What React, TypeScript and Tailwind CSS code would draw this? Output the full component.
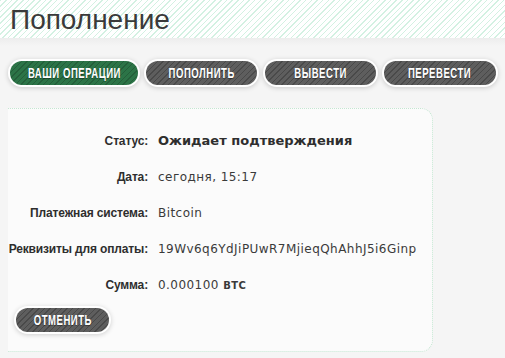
import { FC } from "react";

type PillProps = {
  label: string;
  active?: boolean;
  className?: string;
};

const Pill: FC<PillProps> = ({ label, active, className }) => (
  <button
    className={
      "h-[24px] rounded-full text-white shadow-[0_0_0_2px_#ffffff,0_1px_5px_2px_rgba(0,0,0,0.18)] flex items-center justify-center " +
      (active
        ? "bg-[#2c7447] bg-[repeating-linear-gradient(135deg,rgba(0,0,0,0.18)_0_1px,transparent_1px_4px)] "
        : "bg-[#5e5e5e] bg-[repeating-linear-gradient(135deg,rgba(0,0,0,0.22)_0_1px,transparent_1px_4px)] ") +
      (className ?? "")
    }
  >
    <span className="inline-block scale-x-[0.68] whitespace-nowrap font-bold uppercase text-[14px] tracking-[0.8px] [font-family:'Liberation_Sans',sans-serif] [text-shadow:0_1px_1px_rgba(0,0,0,0.4)]">
      {label}
    </span>
  </button>
);

const rows: { label: string; value: React.ReactNode }[] = [
  {
    label: "Статус:",
    value: <span className="font-bold text-[13px] text-[#2e2e2e] tracking-[0px]">Ожидает подтверждения</span>,
  },
  { label: "Дата:", value: "сегодня, 15:17" },
  { label: "Платежная система:", value: "Bitcoin" },
  { label: "Реквизиты для оплаты:", value: "19Wv6q6YdJiPUwR7MjieqQhAhhJ5i6Ginp" },
  {
    label: "Сумма:",
    value: (
      <span>
        0.000100 <span className="font-bold text-[10px]">BTC</span>
      </span>
    ),
  },
];

export default function App() {
  return (
    <div className="w-[505px] h-[358px] overflow-hidden bg-[#f5f5f5] [font-family:'Liberation_Sans',sans-serif]">
      <div className="h-[38px] bg-white bg-[repeating-linear-gradient(135deg,#d3f1e2_0_1px,transparent_1px_4px)] pl-[10px] flex items-center">
        <h1 className="text-[28px] leading-none text-[#3a3a3a] pt-[2px] [font-family:'Liberation_Sans',sans-serif]">
          Пополнение
        </h1>
      </div>
      <div className="h-[8px] bg-gradient-to-b from-[#ededed] to-transparent" />

      <div className="flex gap-[8px] pl-[10px] mt-[15px]">
        <Pill label="Ваши операции" active className="w-[128px]" />
        <Pill label="Пополнить" className="w-[111px]" />
        <Pill label="Вывести" className="w-[111px]" />
        <Pill label="Перевести" className="w-[112px]" />
      </div>

      <div className="ml-[8px] mt-[23px] w-[425px] h-[244px] bg-[#fbfbfb] rounded-r-[12px] border-t border-r border-b border-dotted border-[#c4e6d1] pt-[14px]">
        <div className="grid grid-cols-[140px_1fr] gap-x-[10px]">
          {rows.map((r) => (
            <div key={r.label} className="contents">
              <div className="h-[36px] flex items-center justify-end whitespace-nowrap font-bold text-[12px] text-[#2e2e2e] tracking-[-0.15px]">
                {r.label}
              </div>
              <div className="h-[36px] flex items-center text-[12px] text-[#3a3a3a] whitespace-nowrap tracking-[0.45px] [font-family:'DejaVu_Sans',sans-serif]">
                {r.value}
              </div>
            </div>
          ))}
        </div>
        <div className="pl-[8px] mt-[5px]">
          <Pill label="Отменить" className="w-[93px]" />
        </div>
      </div>
    </div>
  );
}
